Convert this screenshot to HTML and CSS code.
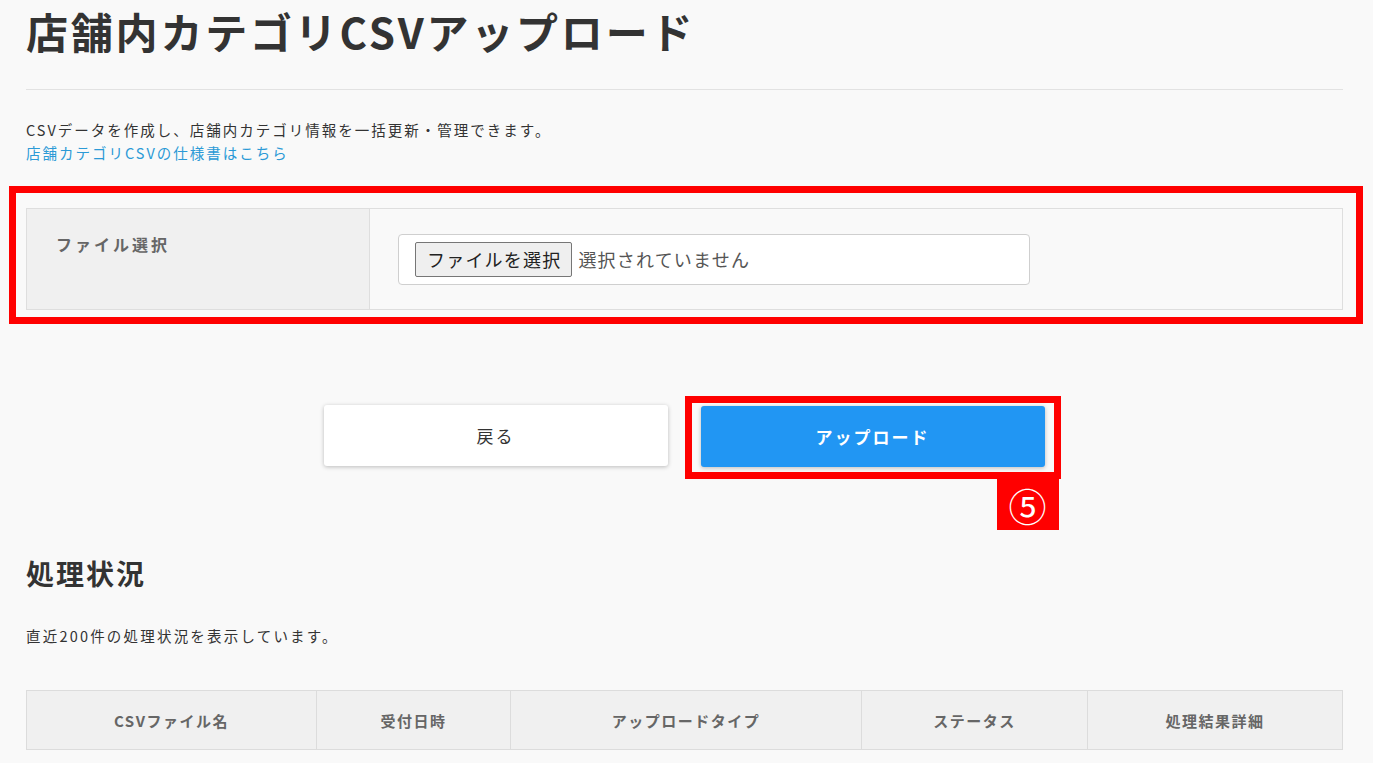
FILE: index.html
```html
<!DOCTYPE html>
<html lang="ja">
<head>
  <meta charset="UTF-8" />
  <title>店舗内カテゴリCSVアップロード</title>
  <link rel="stylesheet" href="styles.css">
</head>
<body>
  <div class="page">
    <h1 class="page-title">店舗内カテゴリCSVアップロード</h1>
    <hr class="divider">

    <p class="lead">
      CSVデータを作成し、店舗内カテゴリ情報を一括更新・管理できます。<br>
      <a href="#" class="spec-link">店舗カテゴリCSVの仕様書はこちら</a>
    </p>

    <!-- 赤枠：ファイル選択 -->
    <div class="mark-box mark-form">
      <table class="form-table">
        <tr>
          <th>ファイル選択</th>
          <td>
            <div class="file-field">
              <span class="file-btn">ファイルを選択</span>
              <span class="file-name">選択されていません</span>
            </div>
          </td>
        </tr>
      </table>
    </div>

    <div class="actions">
      <button class="btn btn-back">戻る</button>
      <div class="mark-box mark-upload">
        <button class="btn btn-upload">アップロード</button>
        <span class="mark-num">⑤</span>
      </div>
    </div>

    <h2 class="section-title">処理状況</h2>
    <p class="section-note">直近200件の処理状況を表示しています。</p>

    <table class="status-table">
      <tr>
        <th class="col-name">CSVファイル名</th>
        <th class="col-date">受付日時</th>
        <th class="col-type">アップロードタイプ</th>
        <th class="col-status">ステータス</th>
        <th>処理結果詳細</th>
      </tr>
    </table>
  </div>
</body>
</html>
```

FILE: styles.css
```css
html, body {
  margin: 0; padding: 0;
}
body {
  background: #f9f9f9;
  color: #333;
  font-family: "Noto Sans CJK JP", "Noto Sans", sans-serif;
  overflow: hidden;
}
.page {
  padding: 0 30px 0 26px;
}

/* タイトル */
.page-title {
  margin: 0;
  font-size: 42px;
  line-height: 61px;
  font-weight: bold;
  color: #333;
  letter-spacing: 2.8px;
}
.divider {
  margin: 28px 0 0;
  border: none;
  border-top: 1px solid #e2e2e2;
}
.lead {
  margin: 28px 0 0;
  font-size: 14.5px;
  line-height: 23px;
  letter-spacing: 2px;
}
.spec-link {
  color: #2b9ad6;
  text-decoration: none;
}

/* 赤枠 */
.mark-box {
  border: 7px solid #f00;
}
.mark-form {
  margin: 22px -20px 0 -17px;
  padding: 15px 13px 7px 10px;
}

.form-table {
  width: 100%;
  border-collapse: collapse;
}
.form-table th,
.form-table td {
  border: 1px solid #dedede;
  height: 100px;
}
.form-table th {
  width: 343px;
  background: #f0f0f0;
  color: #666;
  font-size: 16px;
  font-weight: bold;
  letter-spacing: 3px;
  text-align: left;
  vertical-align: top;
  padding: 23px 0 0 29px;
  box-sizing: border-box;
}
.form-table td {
  padding: 0 0 0 28px;
  vertical-align: middle;
}
.file-field {
  width: 632px;
  height: 51px;
  box-sizing: border-box;
  background: #fff;
  border: 1px solid #cfcfcf;
  border-radius: 4px;
  display: flex;
  align-items: center;
  padding-left: 16px;
  gap: 6px;
}
.file-btn {
  display: inline-block;
  padding: 0 10px 0 11px;
  height: 35px;
  line-height: 33px;
  box-sizing: border-box;
  border: 1px solid #767676;
  border-radius: 2px;
  background: #efefef;
  color: #222;
  font-size: 18px;
  letter-spacing: 1.2px;
}
.file-name {
  font-size: 18px;
  letter-spacing: 1.2px;
  color: #555;
}

/* ボタン */
.actions {
  display: flex;
  justify-content: center;
  align-items: flex-start;
  gap: 17px;
  margin-top: 72px;
  padding-left: 15px;
}
.btn {
  width: 344px;
  height: 61px;
  border: none;
  border-radius: 3px;
  font-family: inherit;
  font-size: 17px;
  font-weight: bold;
  letter-spacing: 2px;
  box-shadow: 0 1px 4px rgba(0,0,0,0.25);
  cursor: pointer;
}
.btn-back {
  margin-top: 9px;
  background: #fff;
  color: #333;
  font-weight: normal;
}
.btn-upload {
  display: block;
  background: #2196f3;
  color: #fff;
}
.mark-upload {
  position: relative;
  padding: 3px 9px 5px 9px;
}
.mark-num {
  position: absolute;
  right: -5px;
  top: 76px;
  width: 62px;
  height: 51px;
  background: #f00;
  color: #fff;
  font-size: 38px;
  line-height: 51px;
  text-align: center;
}

/* 処理状況 */
.section-title {
  margin: 74px 0 0;
  font-size: 28px;
  line-height: 40px;
  font-weight: bold;
  letter-spacing: 2px;
}
.section-note {
  margin: 33px 0 0;
  font-size: 14.5px;
  line-height: 20px;
  letter-spacing: 2.2px;
}
.status-table {
  width: 100%;
  margin-top: 44px;
  border-collapse: collapse;
  table-layout: fixed;
}
.status-table th {
  height: 56px;
  background: #f0f0f0;
  border: 1px solid #dcdcdc;
  color: #666;
  font-size: 15px;
  font-weight: bold;
  letter-spacing: 1.5px;
}
.col-name { width: 287px; }
.col-date { width: 191px; }
.col-type { width: 348px; }
.col-status { width: 223px; }
```
